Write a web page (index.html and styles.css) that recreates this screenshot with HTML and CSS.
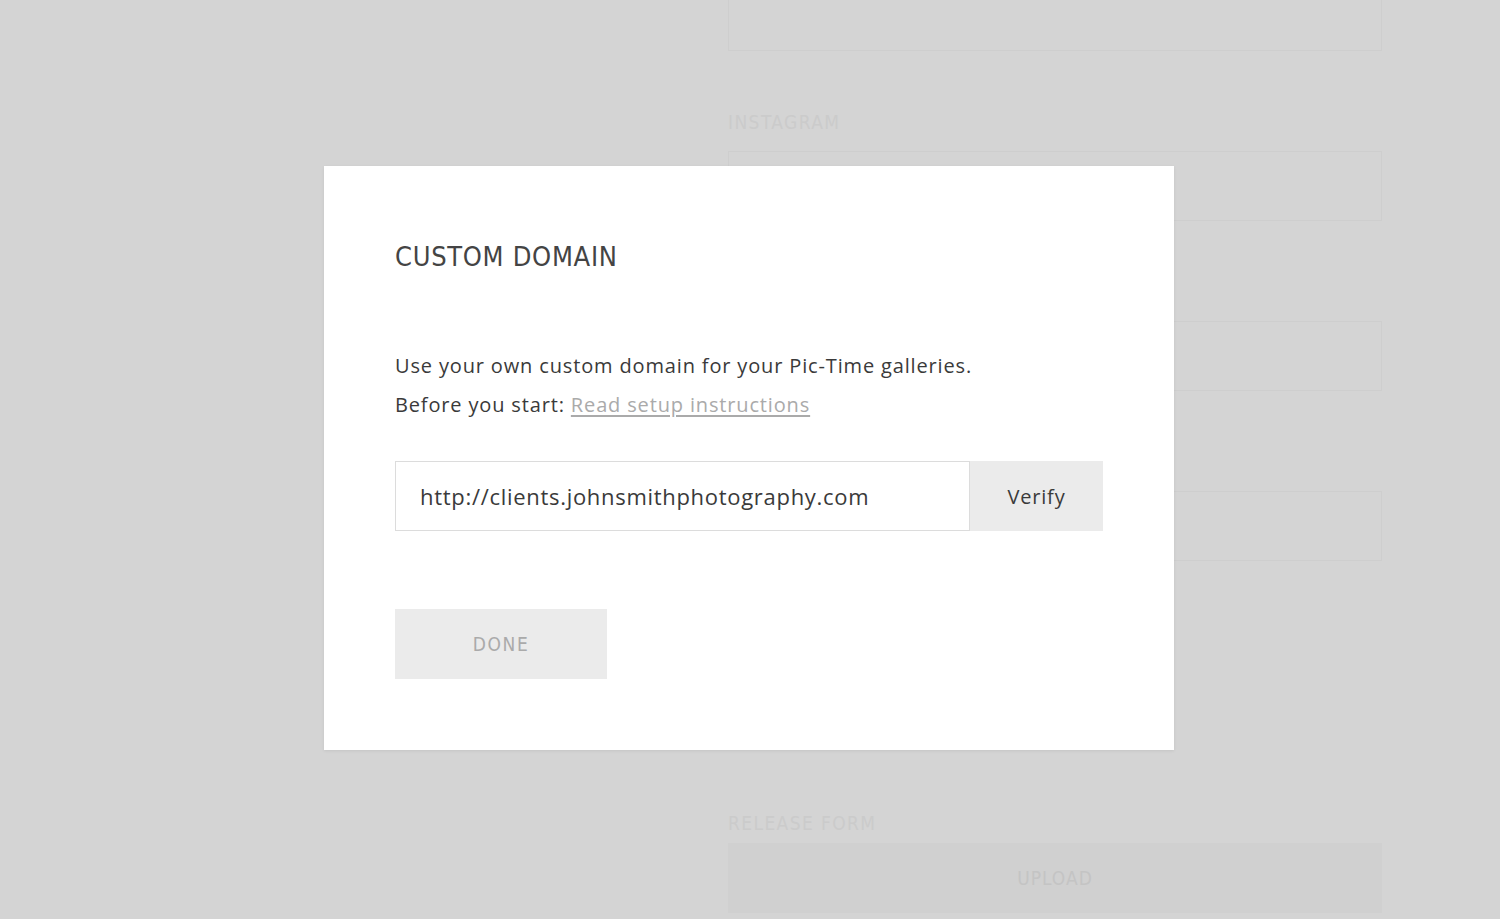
FILE: index.html
```html
<!DOCTYPE html>
<html lang="en">
<head>
  <meta charset="UTF-8" />
  <meta name="viewport" content="width=device-width, initial-scale=1" />
  <title>Custom Domain</title>
  <link rel="stylesheet" href="styles.css">
</head>
<body>
  <div class="page">
    <div class="settings">
      <div class="field-box first"></div>

      <label class="field-label">INSTAGRAM</label>
      <div class="field-box"></div>

      <label class="field-label">PINTEREST</label>
      <div class="field-box"></div>

      <label class="field-label">TWITTER</label>
      <div class="field-box"></div>

      <label class="field-label release">RELEASE FORM</label>
      <div class="upload-box">UPLOAD</div>
    </div>
  </div>

  <div class="overlay">
    <div class="modal">
      <h2 class="modal-title">CUSTOM DOMAIN</h2>

      <p class="modal-text">Use your own custom domain for your Pic-Time galleries.</p>
      <p class="modal-text">Before you start: <a href="#" class="setup-link">Read setup instructions</a></p>

      <div class="domain-row">
        <input type="text" class="domain-input" value="http://clients.johnsmithphotography.com" />
        <button class="verify-button">Verify</button>
      </div>

      <button class="done-button">DONE</button>
    </div>
  </div>
</body>
</html>
```

FILE: styles.css
```css
:root {
  --page-grey: #d4d4d4;
  --field-line: #cecece;
  --text-dark: #3a3a3a;
  --button-grey: #ebebeb;
}

html, body {
  margin: 0;
  height: 100%;
}

body {
  background-color: var(--page-grey);
  font-family: "Open Sans", "Lato", sans-serif;
  overflow: hidden;
}

.page {
  height: 919px;
  overflow: hidden;
}

.settings {
  margin-left: 728px;
  width: 654px;
  margin-top: -19px;
}

.field-box {
  height: 68px;
  border: 1px solid var(--field-line);
}

.field-label {
  display: block;
  font-family: "DejaVu Sans Condensed", "DejaVu Sans", sans-serif;
  font-size: 19px;
  line-height: 22px;
  color: #cbcbcb;
  margin-top: 60px;
  margin-bottom: 18px;
  letter-spacing: 1.4px;
}

.field-label.release {
  margin-top: 251px;
  margin-bottom: 9px;
}

.upload-box {
  height: 70px;
  background-color: #d0d0d0;
  display: flex;
  align-items: center;
  justify-content: center;
  font-family: "DejaVu Sans Condensed", "DejaVu Sans", sans-serif;
  font-size: 19px;
  letter-spacing: 1px;
  color: #c4c4c4;
}

.overlay {
  position: absolute;
  top: 0;
  left: 0;
  right: 0;
  bottom: 0;
}

.modal {
  position: absolute;
  left: 324px;
  top: 166px;
  width: 850px;
  height: 584px;
  box-sizing: border-box;
  background: #fff;
  padding: 74px 71px 0 71px;
  box-shadow: 0 1px 3px rgba(0,0,0,0.08);
}

.modal-title {
  margin: 0;
  font-family: "DejaVu Sans Condensed", "DejaVu Sans", sans-serif;
  font-weight: normal;
  font-size: 27px;
  letter-spacing: 0.7px;
  color: #444;
  line-height: 34px;
}

.modal-text {
  margin: 0;
  font-size: 20px;
  line-height: 39px;
  letter-spacing: 0.85px;
  color: var(--text-dark);
}

.modal-title + .modal-text {
  margin-top: 72px;
}

.setup-link {
  color: #aaa;
  text-decoration: underline;
  text-underline-offset: 3px;
}

.domain-row {
  display: flex;
  margin-top: 37px;
  width: 708px;
}

.domain-input {
  flex: 1;
  height: 70px;
  box-sizing: border-box;
  border: 1px solid #dcdcdc;
  padding: 0 24px;
  font-family: "Open Sans", "Lato", sans-serif;
  font-size: 22px;
  letter-spacing: 0.7px;
  color: var(--text-dark);
  outline: none;
}

.verify-button {
  width: 133px;
  height: 70px;
  border: none;
  background-color: var(--button-grey);
  font-family: "Open Sans", "Lato", sans-serif;
  font-size: 20px;
  letter-spacing: 0.8px;
  color: var(--text-dark);
  cursor: pointer;
}

.done-button {
  display: block;
  margin-top: 78px;
  width: 212px;
  height: 70px;
  border: none;
  background-color: var(--button-grey);
  font-family: "DejaVu Sans Condensed", "DejaVu Sans", sans-serif;
  font-size: 19px;
  letter-spacing: 1.6px;
  color: #aaa;
  cursor: pointer;
}
```
